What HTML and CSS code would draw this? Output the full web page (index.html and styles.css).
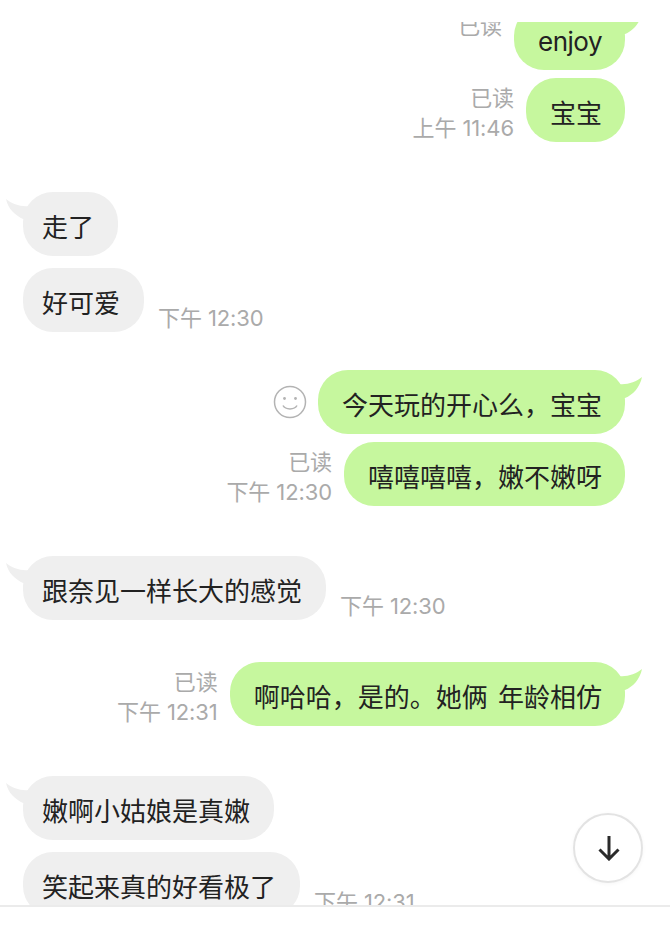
FILE: index.html
```html
<!DOCTYPE html>
<html lang="zh-CN">
<head>
<meta charset="utf-8">
<title>聊天</title>
<link rel="stylesheet" href="styles.css">
</head>
<body>
<div class="page">
  <div class="top-space"></div>
  <main class="chat">
    <div class="thread">
      <section class="group mine first-group">
        <div class="row">
          <div class="meta"><span>已读</span><span>&nbsp;</span></div>
          <div class="bubble latin">enjoy<svg class="tail tail-right" width="24" height="30" viewBox="0 0 24 30"><path d="M0 14C8 15 17 12 23 7C21 17 14 25 6 28L0 28Z"/></svg></div>
        </div>
        <div class="row">
          <div class="meta"><span>已读</span><span>上午 11:46</span></div>
          <div class="bubble">宝宝</div>
        </div>
      </section>
      <section class="group theirs">
        <div class="row">
          <div class="bubble">走了<svg class="tail tail-left" width="24" height="30" viewBox="0 0 24 30"><path d="M24 14C16 15 7 12 1 7C3 17 10 23 18 27L24 27Z"/></svg></div>
        </div>
        <div class="row">
          <div class="bubble">好可爱</div>
          <div class="meta"><span>下午 12:30</span></div>
        </div>
      </section>
      <section class="group mine close">
        <div class="row">
          <svg class="smile" width="34" height="34" viewBox="0 0 34 34" fill="none"><circle cx="17" cy="17" r="15.5"/><circle class="eye" cx="11.500" cy="13.500" r="1.400"/><circle class="eye" cx="22.500" cy="13.500" r="1.400"/><path d="M10 20.500C12.500 25 21.500 25 24 20.500"/></svg>
          <div class="bubble">今天玩的开心么，宝宝<svg class="tail tail-right" width="24" height="30" viewBox="0 0 24 30"><path d="M0 14C8 15 17 12 23 7C21 17 14 25 6 28L0 28Z"/></svg></div>
        </div>
        <div class="row">
          <div class="meta"><span>已读</span><span>下午 12:30</span></div>
          <div class="bubble">嘻嘻嘻嘻，嫩不嫩呀</div>
        </div>
      </section>
      <section class="group theirs">
        <div class="row">
          <div class="bubble">跟奈见一样长大的感觉<svg class="tail tail-left" width="24" height="30" viewBox="0 0 24 30"><path d="M24 14C16 15 7 12 1 7C3 17 10 23 18 27L24 27Z"/></svg></div>
          <div class="meta"><span>下午 12:30</span></div>
        </div>
      </section>
      <section class="group mine near">
        <div class="row">
          <div class="meta"><span>已读</span><span>下午 12:31</span></div>
          <div class="bubble wide-space">啊哈哈，是的。她俩 年龄相仿<svg class="tail tail-right" width="24" height="30" viewBox="0 0 24 30"><path d="M0 14C8 15 17 12 23 7C21 17 14 25 6 28L0 28Z"/></svg></div>
        </div>
      </section>
      <section class="group theirs">
        <div class="row">
          <div class="bubble">嫩啊小姑娘是真嫩<svg class="tail tail-left" width="24" height="30" viewBox="0 0 24 30"><path d="M24 14C16 15 7 12 1 7C3 17 10 23 18 27L24 27Z"/></svg></div>
        </div>
        <div class="row">
          <div class="bubble">笑起来真的好看极了</div>
          <div class="meta"><span>下午 12:31</span></div>
        </div>
      </section>
    </div>
  </main>
  <footer class="footer"></footer>
  <button class="down" type="button" aria-label="回到底部">
    <svg width="26" height="26" viewBox="0 0 26 26" fill="none"><path d="M14 1V24M4.500 14.500L14 24L23.500 14.500"/></svg>
  </button>
</div>
</body>
</html>
```
FILE: styles.css
```css
* { box-sizing: border-box; }
html, body { margin: 0; padding: 0; background: #fff; }
body { font-family: "Inter", "Noto Sans CJK SC", sans-serif; color: #222; }
.page { position: relative; width: 670px; height: 930px; display: flex; flex-direction: column; overflow: hidden; }
.top-space { height: 22px; flex: none; background: #fff; }
.chat { height: 883px; flex: none; overflow: hidden; }
.thread { display: flex; flex-direction: column; margin-top: -16px; }
.group { display: flex; flex-direction: column; margin-top: 50px; }
.first-group { margin-top: 0; }
.close { margin-top: 38px; }
.near { margin-top: 42px; }
.mine { gap: 8px; padding-right: 45px; }
.theirs { gap: 12px; padding-left: 23px; }
.row { display: flex; align-items: flex-end; }
.mine .row { justify-content: flex-end; gap: 12px; }
.theirs .row { gap: 14px; }
.bubble { position: relative; height: 64px; border-radius: 30px; font-size: 26px; line-height: 71px; white-space: nowrap; flex: none; }
.mine .bubble { background: #c6f79e; padding: 0 23px 0 24px; }
.theirs .bubble { background: #efefef; padding: 0 24px 0 19px; }
.latin { letter-spacing: -.5px; }
.wide-space { word-spacing: 3px; }
.meta { display: flex; flex-direction: column; font-size: 22px; line-height: 30px; color: #aaa; white-space: nowrap; margin-bottom: -1px; letter-spacing: -.1px; }
.mine .meta { text-align: right; align-items: flex-end; }
.tail { position: absolute; top: 0; }
.tail-right { left: calc(100% - 6px); }
.tail-right path { fill: #c6f79e; }
.tail-left { right: calc(100% - 6px); }
.tail-left path { fill: #efefef; }
.smile { align-self: center; flex: none; margin-right: -1px; }
.smile circle, .smile path { stroke: #b3b3b3; stroke-width: 1.5; }
.smile .eye { fill: #b3b3b3; stroke: none; }
.footer { flex: 1; border-top: 2px solid #ebebeb; background: #fff; }
.down { position: absolute; left: 573px; top: 813px; width: 70px; height: 70px; padding: 0; border: 2px solid #e3e3e3; border-radius: 50%; background: #fff; box-shadow: 0 1px 4px rgba(0,0,0,.04); display: flex; align-items: center; justify-content: center; }
.down path { stroke: #2b2b2b; stroke-width: 3; }
```
